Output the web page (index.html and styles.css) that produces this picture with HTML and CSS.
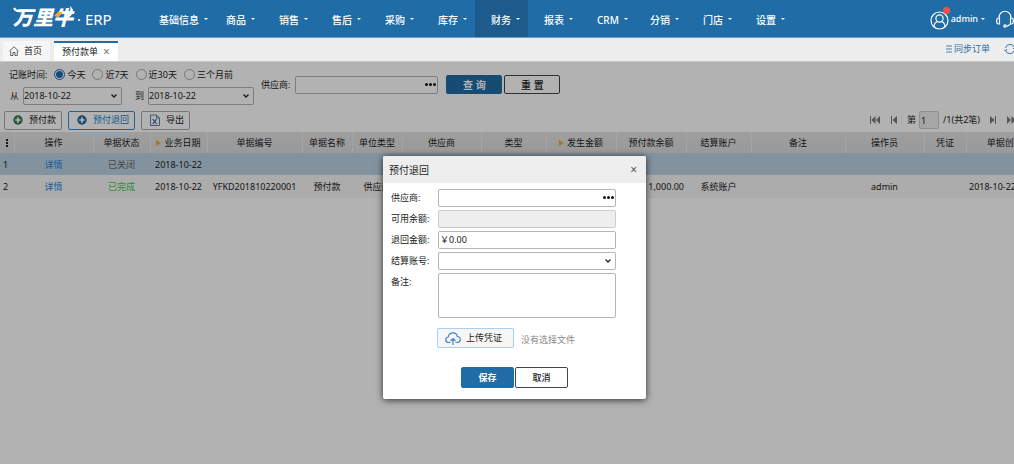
FILE: index.html
```html
<!DOCTYPE html>
<html lang="zh-CN">
<head>
<meta charset="utf-8">
<title>万里牛 ERP - 预付款单</title>
<link rel="stylesheet" href="styles.css">
</head>
<body>
<header class="topbar">
  <a class="logo" href="#">
    <span class="logo-name">万里牛</span>
    <svg class="logo-horn" width="64" height="24" viewBox="0 0 64 24" aria-hidden="true"><path d="M1 3q2 4 7 3" fill="none" stroke="#fff" stroke-width="2"/><path d="M57 1q7 6-2 12l-3-1q7-5 5-11z" fill="#fff"/><path d="M41 11l4-4h5l-5 5z" fill="#f0a830"/></svg>
    <span class="logo-product">· ERP</span>
  </a>
  <nav class="nav">
    <a class="nav-item nav-wide" href="#">基础信息<i class="chev"></i></a>
    <a class="nav-item" href="#">商品<i class="chev"></i></a>
    <a class="nav-item" href="#">销售<i class="chev"></i></a>
    <a class="nav-item" href="#">售后<i class="chev"></i></a>
    <a class="nav-item" href="#">采购<i class="chev"></i></a>
    <a class="nav-item" href="#">库存<i class="chev"></i></a>
    <a class="nav-item nav-active" href="#">财务<i class="chev"></i></a>
    <a class="nav-item" href="#">报表<i class="chev"></i></a>
    <a class="nav-item" href="#">CRM<i class="chev"></i></a>
    <a class="nav-item" href="#">分销<i class="chev"></i></a>
    <a class="nav-item" href="#">门店<i class="chev"></i></a>
    <a class="nav-item" href="#">设置<i class="chev"></i></a>
  </nav>
  <div class="account">
    <a class="user" href="#">
      <svg width="20" height="28" viewBox="0 0 20 28" aria-hidden="true"><g fill="none" stroke="#fff" stroke-width="1.2"><circle cx="9.500" cy="15.500" r="8.500"/><circle cx="9.500" cy="13.500" r="3.600"/><path d="M4 22c0-3 2-5 3.500-5.500M15 22c0-3-2-5-3.500-5.500"/></g><circle cx="16.500" cy="5.500" r="3.500" fill="#ee5148"/></svg>
      admin<i class="chev"></i>
    </a>
    <svg class="headset" width="18" height="18" viewBox="0 0 18 18" aria-hidden="true"><g fill="none" stroke="#fff" stroke-width="1.200"><path d="M3 8c0-9 12-9 12 0M3.500 8h-1c-2.500 0-2.500 6 0 6h1zM14.500 8h1c2.500 0 2.500 6 0 6h-1zM14 14q-1 2-3.500 2.300"/><circle cx="9" cy="16" r="1.200"/></g></svg>
  </div>
</header>

<div class="tabs">
  <a class="tab" href="#"><svg width="10" height="10" viewBox="0 0 10 10" aria-hidden="true"><path d="M.5 5L5 .8 9.500 5M1.700 4.500v5h2.300v-3h2v3h2.300v-5" fill="none" stroke="#555" stroke-width=".9"/></svg>首页</a>
  <a class="tab tab-active" href="#">预付款单<span class="tab-close">×</span></a>
  <div class="tab-tools">
    <a href="#"><svg width="6" height="8" viewBox="0 0 6 8" aria-hidden="true"><path d="M0 1h6M0 4h6M0 7h6" stroke="#4d80ad"/></svg>同步订单</a>
    <svg class="refresh" width="12" height="12" viewBox="0 0 12 12" aria-hidden="true"><path d="M1.500 7.500A4.700 4.700 0 0 0 10.500 7M10.500 4.500A4.700 4.700 0 0 0 1.500 5M0 6.500l1.500 1.500 1.500-2M9 5.500l2 0V3.500" fill="none" stroke="#3c76a8"/></svg>
  </div>
</div>

<main class="content">
  <form class="filters">
    <div class="filter-time">
      <div class="radio-row">
        <span class="radio-title">记账时间:</span>
        <label><input type="radio" name="range" checked>今天</label>
        <label><input type="radio" name="range">近7天</label>
        <label><input type="radio" name="range">近30天</label>
        <label><input type="radio" name="range">三个月前</label>
      </div>
      <div class="date-row">
        <label for="from">从</label>
        <select id="from" class="field date-select arrow"><option>2018-10-22</option></select>
        <label for="to" class="to-label">到</label>
        <select id="to" class="field date-select date-to arrow"><option>2018-10-22</option></select>
      </div>
    </div>
    <div class="filter-supplier">
      <label for="supplier">供应商:</label>
      <span class="picker"><input id="supplier" class="field" type="text"><button type="button" class="more" aria-label="选择供应商"><i></i><i></i><i></i></button></span>
      <button type="button" class="btn btn-primary">查 询</button>
      <button type="button" class="btn btn-reset">重 置</button>
    </div>
  </form>

  <div class="toolbar">
    <button class="tool"><svg width="10" height="10" viewBox="0 0 10 10" aria-hidden="true"><circle cx="5" cy="5" r="4.700" fill="#3a7d50"/><path d="M5 2.300v5.400M2.300 5h5.400" stroke="#fff" stroke-width="1.700"/></svg>预付款</button>
    <button class="tool tool-active"><svg width="10" height="10" viewBox="0 0 10 10" aria-hidden="true"><circle cx="5" cy="5" r="4.700" fill="#1e6cab"/><path d="M5 2.300v5.400M2.300 5h5.400" stroke="#fff" stroke-width="1.700"/></svg>预付退回</button>
    <button class="tool tool-export"><svg width="10" height="12" viewBox="0 0 10 12" aria-hidden="true"><path d="M.5 1h6l3 3v7.500h-9zM6.500 1v3h3" fill="none" stroke="#5c7ca8"/><path d="M2.700 5l4 5M6.700 5l-4 5" stroke="#3f5fa0" stroke-width="1.200"/></svg>导出</button>
    <div class="pager">
      <button aria-label="首页"><svg width="10" height="8" viewBox="0 0 10 8"><path d="M0 0h1v8H0zM5.500 0v8L1.500 4zM10 0v8L6 4z"/></svg></button>
      <button aria-label="上一页"><svg width="6" height="8" viewBox="0 0 6 8"><path d="M0 0h1v8H0zM6 0v8L1.500 4z"/></svg></button>
      <label class="page-label">第<input class="page-input" type="text" value="1"></label>
      <span class="page-total">/1(共2笔)</span>
      <button aria-label="下一页"><svg width="6" height="8" viewBox="0 0 6 8"><path d="M5 0h1v8H5zM0 0v8l4.500-4z"/></svg></button>
      <button aria-label="末页"><svg width="10" height="8" viewBox="0 0 10 8"><path d="M9 0h1v8H9zM0 0v8l4-4zM4.500 0v8l4-4z"/></svg></button>
    </div>
  </div>

  <div class="grid-wrap">
    <table class="grid">
      <colgroup><col class="c-no"><col class="c-op"><col class="c-status"><col class="c-date"><col class="c-code"><col class="c-name"><col class="c-name"><col class="c-op"><col class="c-status-wide"><col class="c-amount"><col class="c-amount"><col class="c-status-wide"><col class="c-memo"><col class="c-op"><col class="c-proof"><col class="c-created"></colgroup>
      <thead><tr><th><span class="dots"><i></i><i></i><i></i></span></th><th>操作</th><th>单据状态</th><th><i class="sort"></i>业务日期</th><th>单据编号</th><th>单据名称</th><th>单位类型</th><th>供应商</th><th>类型</th><th><i class="sort"></i>发生金额</th><th>预付款余额</th><th>结算账户</th><th>备注</th><th>操作员</th><th>凭证</th><th>单据创建时间</th></tr></thead>
      <tbody>
        <tr class="selected"><td class="num">1</td><td><a href="#">详情</a></td><td class="closed">已关闭</td><td>2018-10-22</td><td></td><td></td><td></td><td></td><td></td><td></td><td></td><td></td><td></td><td></td><td></td><td></td></tr>
        <tr><td class="num">2</td><td><a href="#">详情</a></td><td class="done">已完成</td><td>2018-10-22</td><td>YFKD201810220001</td><td>预付款</td><td>供应商</td><td></td><td></td><td></td><td class="money">1,000.00</td><td>系统账户</td><td></td><td>admin</td><td></td><td class="created">2018-10-22</td></tr>
      </tbody>
    </table>
  </div>
  <div class="mask"></div>
</main>

<section class="dialog" role="dialog" aria-labelledby="dialog-title">
  <header class="dialog-head"><h2 id="dialog-title">预付退回</h2><button class="dialog-close" aria-label="关闭">×</button></header>
  <form class="dialog-body">
    <div class="form-row"><label for="d-supplier">供应商:</label><span class="picker"><input id="d-supplier" class="field" type="text"><button type="button" class="more" aria-label="选择供应商"><i></i><i></i><i></i></button></span></div>
    <div class="form-row"><label for="d-balance">可用余额:</label><input id="d-balance" class="field" type="text" disabled></div>
    <div class="form-row"><label for="d-amount">退回金额:</label><input id="d-amount" class="field" type="text" value="￥0.00"></div>
    <div class="form-row"><label for="d-account">结算账号:</label><select id="d-account" class="field arrow"><option></option></select></div>
    <div class="form-row"><label for="d-memo">备注:</label><textarea id="d-memo" class="field memo"></textarea></div>
    <div class="upload-row">
      <button type="button" class="upload"><svg width="16" height="13" viewBox="0 0 16 13" aria-hidden="true"><path d="M5.500 10.500H4C-.5 10.500 0 5 3.300 5 4-.5 11.500-.5 12.300 4.500c4 0 4 6-.3 6h-1.500M8 13V6.500M5.500 9L8 6.500 10.500 9" fill="none" stroke="#3f87c4" stroke-width="1.200"/></svg>上传凭证</button>
      <span class="upload-hint">没有选择文件</span>
    </div>
    <div class="actions"><button type="button" class="btn btn-primary">保存</button><button type="button" class="btn">取消</button></div>
  </form>
</section>
</body>
</html>
```

FILE: styles.css
```css
* { box-sizing: border-box; }
body {
  margin: 0;
  min-height: 100vh;
  display: flex;
  flex-direction: column;
  overflow: hidden;
  font: 9px/12px "Noto Sans", "Noto Sans CJK SC", sans-serif;
  color: #222;
  background: #fff;
}
button, input, select, textarea { font: inherit; color: inherit; margin: 0; }
button { padding: 0; border: 0; background: none; white-space: nowrap; }
a { color: inherit; text-decoration: none; }
svg { display: block; flex: none; }

.topbar {
  display: flex;
  height: 38px;
  color: #fff;
  background: #206ca6;
  border-bottom: 1px solid #6a9fca;
}
.logo { position: relative; display: flex; align-items: center; width: 143px; padding-left: 13px; flex: none; }
.logo-name { width: 64px; padding-bottom: 2px; font-size: 20px; line-height: 24px; font-weight: 900; font-style: italic; white-space: nowrap; }
.logo-horn { position: absolute; left: 13px; top: 5px; }
.logo-product { font-size: 15px; line-height: 20px; }
.nav { display: flex; font-size: 10px; font-weight: 500; }
.nav-item { display: flex; align-items: center; min-width: 53px; padding: 2px 2px 0 16px; white-space: nowrap; }
.nav-wide { width: 67px; padding-right: 0; }
.nav-active { background: #1c5b8b; }
.chev { width: 0; height: 0; margin: 0 3px 2px 5px; border: 2px solid transparent; border-top-color: #fff; border-bottom: 0; }
.account { display: flex; align-items: center; margin-left: auto; font-weight: 500; }
.user { display: flex; align-items: center; gap: 1px; }
.user .chev { margin: 0 11px 0 2px; }
.headset { margin-top: 1px; }

.tabs { display: flex; align-items: flex-end; gap: 4px; height: 24px; padding-left: 3px; background: #ededed; border-bottom: 1px solid #c8c8c8; }
.tab { display: flex; align-items: center; gap: 5px; height: 20px; padding: 0 8px 0 6px; background: #f6f6f6; }
.tab-active { padding: 0 8px; background: #fff; border-top: 2px solid #206ca6; }
.tab-close { font-size: 12px; color: #777; }
.tab-tools { display: flex; align-items: center; gap: 14px; height: 24px; margin-left: auto; margin-right: -2px; color: #2e6c9f; }
.tab-tools a { display: flex; align-items: center; gap: 2px; }

.content { position: relative; flex: 1; overflow: hidden; }
.mask { position: absolute; inset: 0; background: rgba(0, 0, 0, .3); }
.filters { display: flex; align-items: flex-start; padding: 6px 0 0 9px; height: 46px; }
.filter-time { width: 252px; flex: none; }
.radio-row { display: flex; align-items: center; gap: 7px; height: 13px; }
.radio-row label { display: flex; align-items: center; gap: 2px; white-space: nowrap; }
.radio-row input {
  appearance: none;
  width: 11px;
  height: 11px;
  border: 1px solid #aaa;
  border-radius: 50%;
  background: #fff;
}
.radio-row input:checked { border-color: #1b6cb0; background: radial-gradient(circle, #1b6cb0 3px, #fff 4px); }
.date-row { display: flex; align-items: center; gap: 4px; margin-top: 6px; }
.date-row label { padding-left: 1px; }
.date-row .to-label { padding-left: 9px; }
.field {
  display: block;
  width: 100%;
  height: 18px;
  padding: 0 2px;
  border: 1px solid #b5b5b5;
  border-radius: 2px;
  background: #fff;
}
.field:disabled { background: #eee; border-color: #ccc; }
.arrow {
  appearance: none;
  background: #fff url("data:image/svg+xml,%3Csvg xmlns='http://www.w3.org/2000/svg' width='8' height='6' viewBox='0 0 8 6'%3E%3Cpath d='M1.500 1.500L4 4l2.500-2.500' fill='none' stroke='%23222' stroke-width='1.300'/%3E%3C/svg%3E") no-repeat right 3px center;
}
.date-row .date-select { width: 99px; padding-left: 0; }
.date-row .date-to { width: 106px; }
.filter-supplier { display: flex; align-items: center; margin-top: 7px; }
.filter-supplier .picker { width: 143px; margin: 0 8px 0 5px; }
.picker { position: relative; display: block; }
.more { position: absolute; right: 2px; top: 5px; display: flex; gap: 1px; padding: 2px 0; }
.more i { width: 3px; height: 3px; border-radius: 50%; background: #111; }
.btn { width: 56px; height: 19px; border: 1px solid #444; border-radius: 2px; background: #fff; font-weight: 500; }
.btn-primary { border-color: #206ca6; background: #206ca6; color: #fff; font-weight: 700; }
.filter-supplier .btn { font-size: 10px; }
.btn-reset { margin-left: 2px; }

.toolbar { display: flex; align-items: center; gap: 6px; height: 24px; padding-left: 4px; }
.tool { display: flex; align-items: center; gap: 6px; height: 19px; padding: 0 5px 0 8px; border: 1px solid #aaa; border-radius: 2px; background: #fff; }
.tool-active { border-color: #2f8fd8; color: #2283d0; }
.pager { display: flex; align-items: center; margin-left: auto; margin-right: -3px; fill: #777; white-space: nowrap; }
.page-label { display: flex; align-items: center; gap: 3px; margin-left: 10px; }
.pager button + button { margin-left: 11px; }
.page-input { width: 20px; height: 18px; padding: 0 1px; border: 1px solid #ccc; border-radius: 2px; background: #eee; }
.page-total { margin: 0 10px 0 4px; }

.grid { width: 1062px; table-layout: fixed; border-collapse: collapse; text-align: center; white-space: nowrap; }
.c-no { width: 14px; }
.c-op { width: 79px; }
.c-status, .c-date { width: 57px; }
.c-status-wide { width: 65px; }
.c-code { width: 95px; }
.c-name { width: 50px; }
.c-amount { width: 70px; }
.c-memo { width: 94px; }
.c-proof { width: 42px; }
.grid th { height: 21px; padding: 0; font-weight: 400; background: linear-gradient(#e3e3e3, #dcdcdc); border-right: 1px solid #ececec; }
.grid td { height: 23px; padding: 1px 0 0; background: #f7f7f7; }
.grid .selected td { height: 22px; background: #bbd3e4; }
.grid a { color: #1a84da; }
.grid .num { text-align: left; padding-left: 3px; }
.grid .money { text-align: right; padding-right: 2px; }
.grid .created { text-align: left; padding-left: 3px; }
.closed { color: #666; }
.done { color: #45c94e; }
.sort { display: inline-block; margin-right: 3px; border: 3px solid transparent; border-left: 5px solid #efab2b; border-right: 0; }
.dots { display: inline-flex; flex-direction: column; gap: 1px; vertical-align: middle; }
.dots i { width: 2px; height: 2px; background: #222; }

.dialog {
  position: absolute;
  left: 383px;
  top: 156px;
  width: 263px;
  background: #fff;
  border-radius: 2px;
  box-shadow: 0 1px 7px rgba(0, 0, 0, .75);
}
.dialog-head { display: flex; align-items: center; justify-content: space-between; height: 27px; padding: 0 9px 0 6px; background: #eee; border-radius: 2px 2px 0 0; }
.dialog-head h2 { margin: 0; font-size: 10px; font-weight: 400; }
.dialog-close { font-size: 12px; color: #555; }
.dialog-body { display: flex; flex-direction: column; gap: 3px; padding: 6px 30px 11px 8px; }
.form-row { display: grid; grid-template-columns: 47px 1fr; line-height: 18px; }
.form-row .field { padding: 0 1px; }
.memo { height: 45px; resize: none; }
.upload-row { display: flex; align-items: center; gap: 7px; margin: 7px 0 0 46px; }
.upload { display: flex; align-items: center; gap: 5px; height: 20px; padding: 0 11px 0 7px; border: 1px solid #a9d0ee; border-radius: 2px; background: #f6f6f6; }
.upload-hint { color: #888; padding-top: 4px; }
.actions { display: flex; gap: 1px; margin: 16px 0 0 70px; }
.actions .btn { width: 53px; height: 21px; }
```
